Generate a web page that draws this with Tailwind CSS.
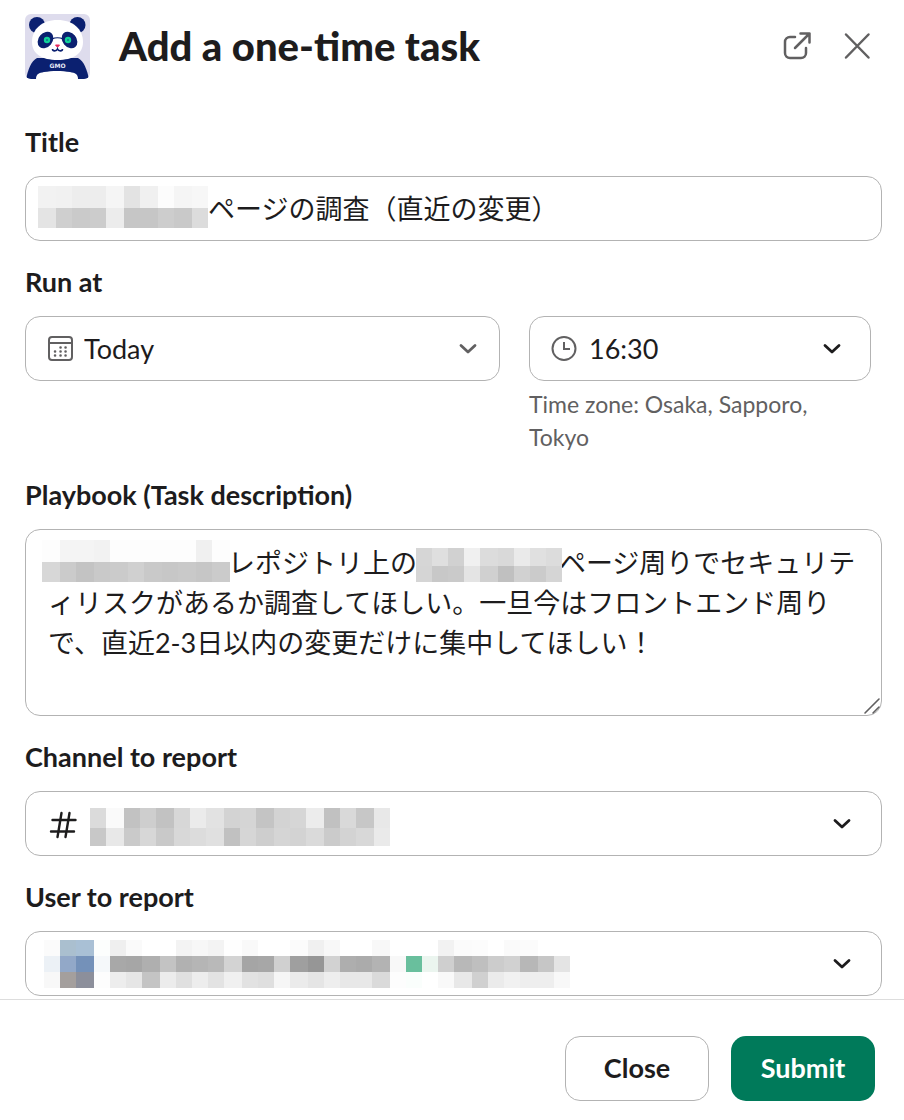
<!DOCTYPE html>
<html lang="en">
<head>
  <meta charset="UTF-8" />
  <meta name="viewport" content="width=device-width, initial-scale=1.0"/>
  <title>Add a one-time task</title>
  <script src="https://cdn.jsdelivr.net/npm/@tailwindcss/browser@4"></script>
</head>
<body class="bg-white text-[#1d1c1d] font-['Lato','Noto_Sans_CJK_JP',sans-serif]">

  <form class="flex min-h-screen flex-col">
    <!-- Header -->
    <header class="flex items-start pt-[14px] pl-[25px] pr-[31px]">
      <svg class="h-[65px] w-[65px] shrink-0 rounded-md" viewBox="0 0 65 65" aria-hidden="true">
        <rect width="65" height="65" fill="#dedced"/>
        <circle cx="12" cy="11" r="8" fill="#0b2070"/>
        <circle cx="52.500" cy="11" r="8" fill="#0b2070"/>
        <path d="M1 65C3 56 6 47 12 44h41c6 3 9 12 11 21z" fill="#0b2070"/>
        <path d="M11 65c0-5 3-6 8-7c8-1.500 18-1.500 26 0c5 1 8 2 8 7z" fill="#fff"/>
        <path d="M32.500 6C17 6 7 15 7 28c0 12 10 18 25.500 18S58 40 58 28C58 15 48 6 32.500 6z" fill="#fff"/>
        <ellipse cx="20.500" cy="26" rx="7" ry="9" transform="rotate(40 20.500 26)" fill="#0b2070"/>
        <ellipse cx="44.500" cy="26" rx="7" ry="9" transform="rotate(-40 44.500 26)" fill="#0b2070"/>
        <path d="M27 25c3-1.500 8-1.500 11 0" fill="none" stroke="#0b2070" stroke-width="1.300"/>
        <circle cx="22" cy="26" r="3.200" fill="#12d39a"/>
        <circle cx="43" cy="26" r="3.200" fill="#12d39a"/>
        <circle cx="22" cy="26" r="1" fill="#0f7a8c"/>
        <circle cx="43" cy="26" r="1" fill="#0f7a8c"/>
        <path d="M30.500 31h4l-2 2.300z" fill="#e8275a" stroke="#e8275a" stroke-width="1" stroke-linejoin="round"/>
        <path d="M27.500 35c0 2.500 4 2.500 5 0c1 2.500 5 2.500 5 0" fill="none" stroke="#0b2070" stroke-width="1.600"/>
        <text x="32.500" y="54" text-anchor="middle" font-family="DejaVu Sans" font-size="6" font-weight="bold" fill="#e8ebf7">GMO</text>
      </svg>
      <h1 class="ml-[29px] flex-1 pt-2 text-[40px] leading-[48px] font-black">Add a one-time task</h1>
      <button type="button" aria-label="Open in new window" class="mt-4 mr-7 h-8 w-8 text-[#616061]">
        <svg class="h-8 w-8" viewBox="0 0 32 32" fill="none" stroke="currentColor" stroke-width="2.500" stroke-linecap="round" stroke-linejoin="round">
          <path d="M14 7H9a5 5 0 0 0-5 5v11a5 5 0 0 0 5 5h11a5 5 0 0 0 5-5v-5"/>
          <path d="M14 18 28.500 3.500M19.500 3.500h9v9"/>
        </svg>
      </button>
      <button type="button" aria-label="Close dialog" class="mt-4 h-8 w-8 text-[#616061]">
        <svg class="h-8 w-8" viewBox="0 0 32 32" fill="none" stroke="currentColor" stroke-width="2.500" stroke-linecap="round">
          <path d="M5 4.500 27.500 27.500M27.500 4.500 5 27.500"/>
        </svg>
      </button>
    </header>

    <!-- Fields -->
    <main class="flex flex-col gap-[22px] pt-11 pb-[3px] pl-[25px] pr-[22px]">
      <div>
        <label for="title" class="mb-[15px] block text-[27px] leading-[38px] font-bold">Title</label>
        <div class="flex h-[65px] rounded-[15px] border border-[#b3b3b3] pt-[9px] pl-3">
          <svg data-mosaic="title" class="shrink-0"></svg>
          <input id="title" type="text" value="ページの調査（直近の変更）" class="h-[42px] min-w-0 flex-1 text-[27px] leading-10 outline-none" />
        </div>
      </div>

      <div class="grid grid-cols-[475fr_342fr] items-start gap-[29px] pr-[11px]">
        <div>
          <label for="date" class="mb-[15px] block text-[27px] leading-[38px] font-bold">Run at</label>
          <div class="relative">
            <select id="date" class="block h-[65px] w-full appearance-none rounded-[15px] border border-[#b3b3b3] bg-white pl-[58px] text-[27px] leading-10">
              <option>Today</option>
            </select>
            <svg class="pointer-events-none absolute top-5 left-[22px] h-[26px] w-[26px] text-[#616061]" viewBox="0 0 26 26" fill="none" stroke="currentColor" stroke-width="2">
              <rect x="2" y="1" width="23" height="23" rx="3"/>
              <path d="M2 7h23"/>
              <path d="M13.500 11.500h.1M18.500 11.500h.1M8 15.500h.1M13.500 15.500h.1M18.500 15.500h.1M8 19.500h.1M13.500 19.500h.1M18.500 19.500h.1" stroke-width="2.500" stroke-linecap="round"/>
            </svg>
            <svg class="pointer-events-none absolute top-6 right-[23px] h-4 w-[18px] text-[#616061]" viewBox="0 0 18 16" fill="none" stroke="currentColor" stroke-width="2.800" stroke-linecap="round" stroke-linejoin="round"><path d="M2 5.500l7 6.500 7-6.500"/></svg>
          </div>
        </div>
        <div class="pt-[53px]">
          <div class="relative">
            <select id="time" aria-label="Time" class="block h-[65px] w-full appearance-none rounded-[15px] border border-[#b3b3b3] bg-white pl-[59px] text-[27px] leading-10">
              <option>16:30</option>
            </select>
            <svg class="pointer-events-none absolute top-5 left-[22px] h-[26px] w-[26px] text-[#616061]" viewBox="0 0 26 26" fill="none" stroke="currentColor" stroke-width="2">
              <circle cx="13" cy="12.500" r="11.500"/>
              <path d="M13 6v7h6"/>
            </svg>
            <svg class="pointer-events-none absolute top-6 right-[30px] h-4 w-[18px]" viewBox="0 0 18 16" fill="none" stroke="currentColor" stroke-width="2.800" stroke-linecap="round" stroke-linejoin="round"><path d="M2 5.500l7 6.500 7-6.500"/></svg>
          </div>
          <p class="mt-[7px] text-[23px] leading-[33px] text-[#616061]">Time zone: Osaka, Sapporo, Tokyo</p>
        </div>
      </div>

      <div>
        <label for="playbook" class="mb-[15px] block text-[27px] leading-[38px] font-bold">Playbook (Task description)</label>
        <div class="relative">
          <textarea id="playbook" class="block h-[187px] w-full resize-none overflow-hidden rounded-[15px] border border-[#b3b3b3] pt-[13px] pr-3 pl-[22px] indent-[180px] text-[27px] leading-10 outline-none">レポジトリ上の　　　　　&nbsp;ページ周りでセキュリテ
ィリスクがあるか調査してほしい。一旦今はフロントエンド周り
で、直近2-3日以内の変更だけに集中してほしい！</textarea>
          <svg data-mosaic="repository" class="absolute top-[11px] left-[17px]"></svg>
          <svg data-mosaic="page" class="absolute top-[19px] left-[391px]"></svg>
          <svg class="pointer-events-none absolute right-0 bottom-0 h-5 w-5" viewBox="0 0 20 20" fill="none" stroke="#616061" stroke-width="1.600" stroke-linecap="round"><path d="M3 17 17 3M11 17l6-6"/></svg>
        </div>
      </div>

      <div>
        <label for="channel" class="mb-[15px] block text-[27px] leading-[38px] font-bold">Channel to report</label>
        <div class="relative">
          <select id="channel" class="block h-[65px] w-full appearance-none rounded-[15px] border border-[#b3b3b3] bg-white"></select>
          <svg class="pointer-events-none absolute top-5 left-6 h-7 w-7" viewBox="0 0 28 28" fill="none" stroke="currentColor" stroke-width="2.400" stroke-linecap="round"><path d="M3.500 9h23M2 20.500h23M12.500 2l-4 24M20.500 2l-4 24"/></svg>
          <svg data-mosaic="channel" class="pointer-events-none absolute top-[17px] left-[65px]"></svg>
          <svg class="pointer-events-none absolute top-6 right-[31px] h-4 w-[18px]" viewBox="0 0 18 16" fill="none" stroke="currentColor" stroke-width="2.800" stroke-linecap="round" stroke-linejoin="round"><path d="M2 5.500l7 6.500 7-6.500"/></svg>
        </div>
      </div>

      <div>
        <label for="user" class="mb-[15px] block text-[27px] leading-[38px] font-bold">User to report</label>
        <div class="relative">
          <select id="user" class="block h-[65px] w-full appearance-none rounded-[15px] border border-[#b3b3b3] bg-white"></select>
          <svg data-mosaic="user" class="pointer-events-none absolute top-[9px] left-[19px]"></svg>
          <svg class="pointer-events-none absolute top-6 right-[31px] h-4 w-[18px]" viewBox="0 0 18 16" fill="none" stroke="currentColor" stroke-width="2.800" stroke-linecap="round" stroke-linejoin="round"><path d="M2 5.500l7 6.500 7-6.500"/></svg>
        </div>
      </div>
    </main>

    <!-- Footer -->
    <footer class="flex justify-end gap-[22px] border-t border-[#dddddd] pt-9 pr-[29px] pb-[18px]">
      <button type="button" class="h-[65px] w-36 rounded-[15px] border border-[#b3b3b3] text-[27px] font-bold">Close</button>
      <button type="submit" class="h-[65px] w-36 rounded-[15px] bg-[#007a5a] text-[27px] font-bold text-white">Submit</button>
    </footer>
  </form>

  <script>
    // edges: column borders, heights: row heights, rows: cell colours (two digits = grey)
    const mosaics = {
      title: {
        edges: [0, 18, 34, 52, 68, 86, 102, 120, 136, 154, 170],
        heights: [22, 20],
        rows: ['f2 f1 ed ed f5 e3 f0 fc f5 f7', 'e4 cf ca cc ec c6 c6 cd c9 dc']
      },
      repository: {
        edges: [0, 18, 34, 52, 68, 86, 102, 120, 136, 154, 170, 188],
        heights: [22, 20],
        rows: ['fd f4 f4 f2 fd fd fd fd fd f0 fd', 'd7 cb c3 c9 cb d0 c9 c7 c9 c6 cb']
      },
      page: {
        edges: [0, 16, 32, 48, 64, 82, 98, 114, 130, 146],
        heights: [18, 16],
        rows: ['d6 df d1 f0 dc d9 ea e0 dc', 'd5 c8 ca e4 d0 c0 d1 cb d5']
      },
      channel: {
        edges: [0, 16, 34, 50, 66, 84, 100, 116, 134, 150, 166, 184, 200, 216, 234, 250, 266, 284, 300],
        heights: [20, 18],
        rows: [
          'db fa c2 ce c2 d7 eb e2 d3 d5 c4 d3 d6 ec c1 d9 c7 e8',
          'c8 e8 ca d7 c9 d8 dc e0 c1 d6 ce d5 d3 da cb d3 d8 ea'
        ]
      },
      user: {
        edges: [0, 16, 32, 50, 66, 82, 98, 116, 132, 148, 164, 180, 198, 214, 230, 246, 264, 280, 296, 312, 328, 346, 362, 378, 394, 410, 428, 444, 460, 476, 494, 510, 526],
        heights: [16, 16, 16],
        rows: [
          'fb aabfcf a9c0d5 fcfefd ef fa ff ff f3 f7 f3 fe f9 ff ff fb f0 f8 ff ff f8 ff ff ff f2 fb fc ff fa fb ff ff',
          'ecf1f6 92a8c8 7491b9 f5f8fa a8 a6 af c3 b1 b5 b9 d3 a5 a7 d0 9f 96 d2 ae ab b3 f8 69bf9d ebf5ef cf b8 bf cc d1 b7 c6 e4',
          'f8 a49f9d 8c8f9b fd ed e6 c4 ec e0 ed e3 f0 e2 df f6 eb e5 ee e8 e8 da fd fafefc ff f9 e8 d0 eb f1 ee ee f8'
        ]
      }
    };

    document.querySelectorAll('[data-mosaic]').forEach((svg) => {
      const { edges, heights, rows } = mosaics[svg.dataset.mosaic];
      let y = 0;
      rows.forEach((row, r) => {
        row.split(' ').forEach((cell, c) => {
          const rect = document.createElementNS('http://www.w3.org/2000/svg', 'rect');
          rect.setAttribute('x', edges[c]);
          rect.setAttribute('y', y);
          rect.setAttribute('width', edges[c + 1] - edges[c]);
          rect.setAttribute('height', heights[r]);
          rect.setAttribute('fill', '#' + (cell.length === 2 ? cell.repeat(3) : cell));
          svg.appendChild(rect);
        });
        y += heights[r];
      });
      svg.setAttribute('width', edges[edges.length - 1]);
      svg.setAttribute('height', y);
    });
  </script>

</body>
</html>
